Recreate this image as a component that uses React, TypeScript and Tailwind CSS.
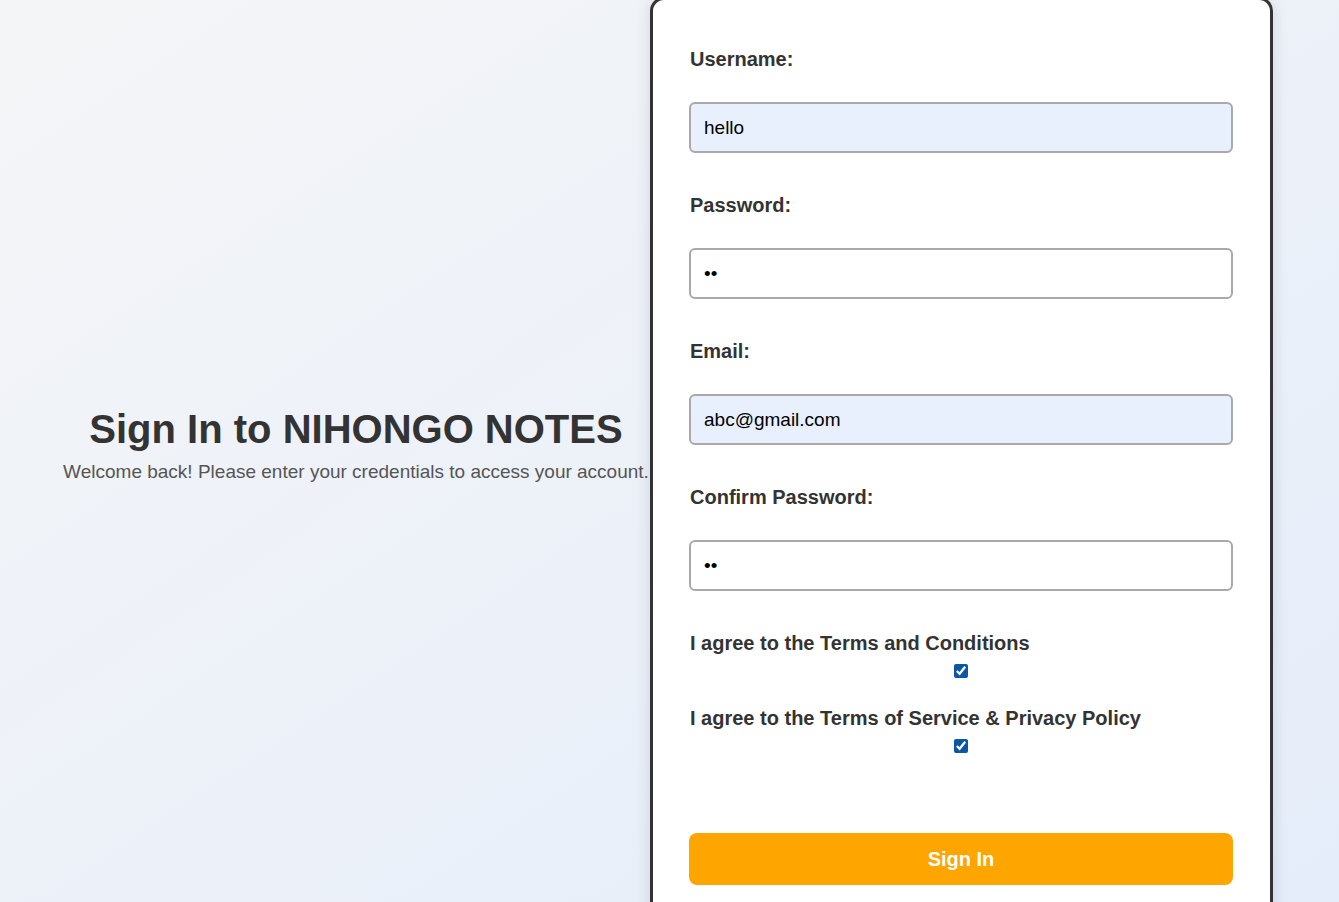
import { useState } from 'react';

const fields = [
  { label: 'Username:', type: 'text', value: 'hello', filled: true },
  { label: 'Password:', type: 'password', value: 'ab', filled: false },
  { label: 'Email:', type: 'email', value: 'abc@gmail.com', filled: true },
  { label: 'Confirm Password:', type: 'password', value: 'ab', filled: false },
];

export default function App() {
  const [terms, setTerms] = useState(true);
  const [privacy, setPrivacy] = useState(true);

  return (
    <div
      className="flex h-[902px] overflow-hidden bg-gradient-to-br from-[#f4f5f7] to-[#e5edfa] text-[#333]"
      style={{ fontFamily: '"Liberation Sans", Arial, sans-serif' }}
    >
      <div className="w-[650px] shrink-0 flex items-center pl-[62px] pb-[13px]">
        <div className="w-[588px] text-center">
          <h1 className="text-[40px] font-bold leading-[46px] text-[#333]">Sign In to NIHONGO NOTES</h1>
          <p className="text-[19px] leading-[22px] text-[#555] mt-[9px] whitespace-nowrap">
            Welcome back! Please enter your credentials to access your account.
          </p>
        </div>
      </div>

      <div className="w-[623px] shrink-0 -mt-[3px] self-start bg-white border-[3px] border-[#333] rounded-[14px] shadow-[0_0_16px_rgba(0,0,0,0.12)] pl-[36px] pr-[37px] pt-[48px] pb-[40px]">
        {fields.map((f) => (
          <div key={f.label} className="mb-[41px]">
            <label className="block pl-px text-[20px] font-bold leading-[23px]">{f.label}</label>
            <input
              type={f.type}
              defaultValue={f.value}
              className={`mt-[31px] block w-full h-[51px] px-[13px] border-2 border-[#a9a9a9] rounded-[6px] text-[19px] text-black outline-none ${
                f.filled ? 'bg-[#e8f0fe]' : 'bg-white'
              }`}
            />
          </div>
        ))}

        <div>
          <label className="block pl-px text-[20px] font-bold leading-[23px]">I agree to the Terms and Conditions</label>
          <div className="flex justify-center mt-[9px]">
            <input
              type="checkbox"
              checked={terms}
              onChange={(e) => setTerms(e.target.checked)}
              className="w-[14px] h-[14px] accent-[#0b57a4]"
            />
          </div>
        </div>

        <div className="mt-[29px]">
          <label className="block pl-px text-[20px] font-bold leading-[23px]">I agree to the Terms of Service &amp; Privacy Policy</label>
          <div className="flex justify-center mt-[9px]">
            <input
              type="checkbox"
              checked={privacy}
              onChange={(e) => setPrivacy(e.target.checked)}
              className="w-[14px] h-[14px] accent-[#0b57a4]"
            />
          </div>
        </div>

        <button className="mt-[80px] w-full h-[52px] rounded-[8px] bg-[#ffa500] text-white text-[20px] font-bold">
          Sign In
        </button>
      </div>
    </div>
  );
}
